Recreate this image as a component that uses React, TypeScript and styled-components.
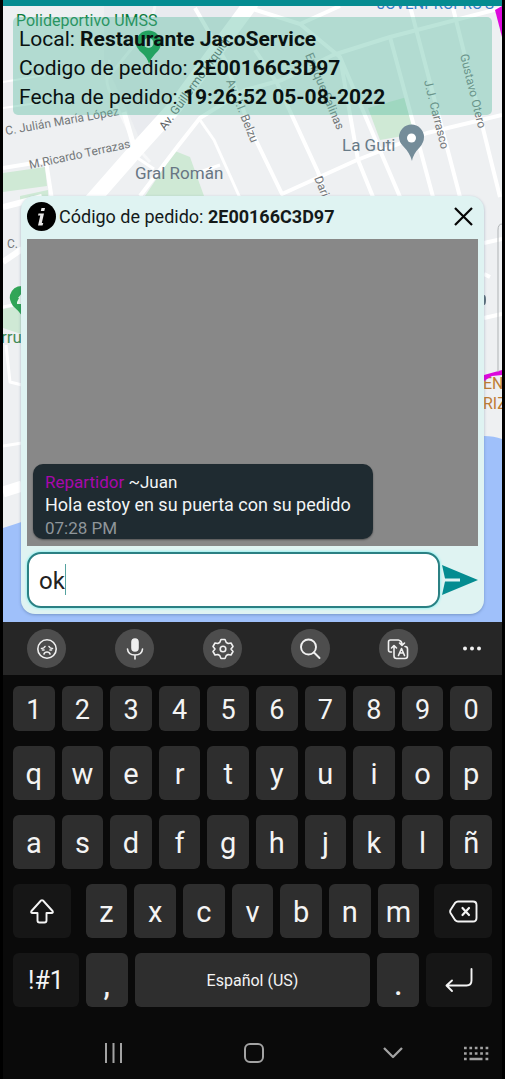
import React, { useState } from "react";
import styled, { createGlobalStyle } from "styled-components";

const teal = "#058c91";

const GlobalStyle = createGlobalStyle`
  *, *::before, *::after { box-sizing: border-box; }
  body { margin: 0; background: #000; font-family: Roboto, "Liberation Sans", sans-serif; }
  button, input { font: inherit; color: inherit; }
  button { margin: 0; padding: 0; border: 0; background: none; cursor: pointer; }
  svg { display: block; }
`;

const Phone = styled.div`
  min-height: 100vh;
  padding: 0 3px;
  background: #000;
  display: flex;
  flex-direction: column;
`;

const Stage = styled.main`
  position: relative;
  display: flex;
  flex-direction: column;
  padding-bottom: 8px;
  overflow: hidden;
  background: #eef0f2;
`;

const MapLayer = styled.svg`
  position: absolute;
  inset: 0;
  width: 100%;
  height: 100%;
`;

const TopBar = styled.div`
  position: relative;
  height: 6px;
  background: ${teal};
`;

const OrderSummary = styled.section`
  position: relative;
  margin: 11px 10px 0;
  padding: 8px 6px 3px;
  border-radius: 5px;
  background: rgba(88, 187, 160, 0.4);
  color: #0a1211;
  font-size: 21px;
  line-height: 29px;

  p { margin: 0; }
`;

const ChatCard = styled.section`
  position: relative;
  margin: 81px 18px 0;
  padding: 0 6px 6px;
  border-radius: 14px;
  background: #dff3f2;
  box-shadow: 0 1px 3px rgba(40, 70, 110, 0.35);
`;

const ChatHeader = styled.header`
  display: flex;
  align-items: center;
  gap: 3px;
  height: 43px;
  padding-bottom: 2px;
`;

const ChatTitle = styled.h1`
  flex: 1;
  margin: 0;
  color: #141a1a;
  font-size: 18px;
  line-height: 24px;
  font-weight: 400;
`;

const CloseButton = styled.button`
  display: grid;
  place-items: center;
  width: 29px;
  height: 29px;
  color: #050505;
`;

const Messages = styled.div`
  display: flex;
  flex-direction: column;
  justify-content: flex-end;
  align-items: flex-start;
  min-height: 307px;
  padding: 6px 6px 7px;
  background: #888;
`;

const Bubble = styled.article`
  padding: 7px 22px 0 12px;
  border-radius: 10px;
  background: #1f2b31;
  box-shadow: 0 1px 2px rgba(0, 0, 0, 0.4);
  color: #f2f5f6;
  font-size: 18px;
  line-height: 24px;

  p { margin: 0; }
`;

const Sender = styled.p`
  font-size: 17px;
  line-height: 22px;
`;

const Role = styled.span`
  color: #a808ac;
`;

const Time = styled.time`
  display: block;
  color: #8f969a;
  font-size: 17px;
  line-height: 22px;
`;

const Composer = styled.form`
  display: flex;
  align-items: center;
  margin-top: 6px;
`;

const MessageInput = styled.input`
  flex: 1;
  min-width: 0;
  height: 56px;
  padding: 2px 10px 0;
  border: 2px solid #2b8083;
  border-radius: 14px;
  background: #fff;
  box-shadow: 0 0 3px #5ff0f0;
  color: #222;
  font-size: 24px;
  outline: none;
`;

const InputWrap = styled.div`
  position: relative;
  flex: 1;
  display: flex;
`;

const Caret = styled.span`
  position: absolute;
  left: 38px;
  top: 12px;
  width: 1px;
  height: 31px;
  background: #55a3a0;
`;

const SendButton = styled.button`
  width: 38px;
  color: ${teal};
`;

const Toolbar = styled.div`
  display: grid;
  grid-template-columns: repeat(5, 88fr) 60fr;
  align-items: center;
  justify-items: center;
  height: 53px;
  background: #262626;
  color: #f0f0f0;
`;

const ToolButton = styled.button<{ $plain?: boolean }>`
  display: grid;
  place-items: center;
  width: 39px;
  height: 39px;
  border-radius: 50%;
  background: ${(p) => (p.$plain ? "transparent" : "#4d4d4d")};
`;

const Keyboard = styled.div`
  display: flex;
  flex-direction: column;
  gap: 15px;
  padding: 11px 10px 0;
  background: #0a0a0a;
`;

const KeyRow = styled.div<{ $short?: boolean }>`
  display: flex;
  gap: 7px;
  height: ${(p) => (p.$short ? 45 : 54)}px;
`;

const Key = styled.button<{ $grow?: number; $kind?: "special" | "space" | "mark"; $spaced?: "left" | "right" }>`
  flex: ${(p) => p.$grow ?? 42} 1 0;
  min-width: 0;
  display: flex;
  align-items: center;
  justify-content: center;
  border-radius: 6px;
  margin-left: ${(p) => (p.$spaced === "left" ? 8 : 0)}px;
  margin-right: ${(p) => (p.$spaced === "right" ? 8 : 0)}px;
  padding-top: ${(p) => (p.$kind === "mark" ? 10 : p.$kind ? 2 : 2)}px;
  background: ${(p) => (p.$kind === "special" ? "#161616" : "#2e2e2e")};
  color: #f4f4f4;
  font-size: ${(p) => (p.$kind === "space" ? 16 : p.$kind === "special" ? 25 : 29)}px;
  font-weight: ${(p) => (p.$kind === "mark" ? 500 : 400)};
  line-height: 34px;
`;

const NumberKey = styled(Key)`
  font-size: 27px;
`;

const NavBar = styled.nav`
  flex: 1;
  display: grid;
  grid-template-columns: repeat(3, minmax(0, 140fr)) minmax(0, 20fr);
  align-items: center;
  justify-items: center;
  min-height: 71px;
  padding: 20px 19px 0 41px;
  background: #0a0a0a;
  color: #a3a3a3;
`;

const NavButton = styled.button`
  display: grid;
  place-items: center;
  width: 20px;
  height: 26px;
`;

function CityMap() {
  return (
    <MapLayer viewBox="3 0 499 622" preserveAspectRatio="xMidYMin slice" aria-hidden="true">
      <path d="M3 6H245L140 140L128 112L104 60V6Z" fill="#e9ebef" />
      <g fill="#cfe9d5">
        <path d="M3 173L45 167L47 186L3 192Z" />
        <path d="M175 151L190 157L204 196H145Z" />
        <path d="M368 108L407 97L413 128L403 136L380 140Z" />
        <path d="M20 196L48 190V200H20Z" />
        <path d="M3 309L24 305V335L3 328Z" />
      </g>
      <g fill="none" stroke="#fff" strokeWidth="4" strokeLinejoin="round">
        <path d="M88 205L138 148L175 107L215 52L252 2" strokeWidth="15" />
        <path d="M3 168L46 161L52 200" />
        <path d="M3 82L45 75M3 108L38 103" strokeWidth="2" />
        <path d="M110 60Q104 78 109 90L136 146L150 162M106 80L150 26L155 6" strokeWidth="3" opacity="0.5" />
        <path d="M124 112L135 150" strokeWidth="5" />
        <path d="M140 196L178 146L200 118L245 90L282 80L333 55L390 37L502 8" />
        <path d="M200 120L214 140L240 198M200 172L220 165M136 157L154 169" strokeWidth="3" />
        <path d="M195 8L225 60L250 128L282 194L357 160L427 133L502 115" />
        <path d="M255 50L277 83L318 172L326 196M250 8L300 24L340 57L358 160L373 197M300 24L340 6M340 57L400 197M390 37L433 197M410 6L460 197M453 8L500 197" />
        <path d="M3 207L42 197M3 262L22 249" strokeWidth="6" />
        <path d="M3 307L22 303M3 446L22 443M6 345L10 382L22 385" strokeWidth="3" />
        <path d="M3 492L22 486" strokeWidth="11" />
        <path d="M484 243L502 239M484 318L502 314M484 274L490 277" />
      </g>
      <path d="M3 528Q60 510 130 480Q320 420 484 436Q494 436 502 439V622H3Z" fill="#9fc0fa" />
      <g fill="#74787a" fontSize="12">
        <text x="6" y="135" transform="rotate(-10 6 135)">C. Julián María López</text>
        <text x="30" y="169" transform="rotate(-12 30 169)">M.Ricardo Terrazas</text>
        <text x="165" y="131" transform="rotate(-54 165 131)" fill="#5b6062">Av. Guillermo Urquidi</text>
        <text x="226" y="81" transform="rotate(68 226 81)">Av. J.I. Belzu</text>
        <text x="305" y="55" transform="rotate(67 305 55)">Enrique Salinas</text>
        <text x="424" y="81" transform="rotate(76 424 81)">J.J. Carrasco</text>
        <text x="460" y="55" transform="rotate(76 460 55)">Gustavo Otero</text>
        <text x="314" y="178" transform="rotate(68 314 178)">Dari</text>
        <text x="7" y="248">C.</text>
      </g>
      <g fontSize="17">
        <text x="16" y="26" fill="#087a38" fontSize="16">Polideportivo UMSS</text>
        <text x="135" y="179" fill="#687683">Gral Román</text>
        <text x="342" y="151" fill="#687b88">La Guti</text>
        <text x="1" y="343" fill="#438b58">rru</text>
        <text x="483" y="389" fill="#bf7d32" fontSize="16">EN</text>
        <text x="483" y="409" fill="#bf7d32" fontSize="16">RIZ</text>
        <text x="377" y="9" fill="#347dcb" fontSize="15">JOVENPROPRO'S</text>
      </g>
      <path d="M149 64Q147 57 142 53Q136 48 136 43A12.5 12.5 0 0 1 161 43Q161 49 155 54Q151 58 149 64Z" fill="#009138" />
      <circle cx="148.500" cy="43" r="5" fill="#d8f4e2" />
      <path d="M412 161Q410 153 403 146Q399 142 399 137A12.500 12.500 0 0 1 424 137Q424 142 420 147Q413 154 412 161Z" fill="#748c99" />
      <circle cx="411.500" cy="138" r="4.500" fill="#fff" />
      <path d="M23 317Q19 311 13 306Q9 300 10 295Q13 285 24 286Z" fill="#31a557" />
      <path d="M17 302L19 298H18L22 293V304H17Z" fill="#eaf8ed" />
      <path d="M495 10L502 6V37Z" fill="#dd08dd" />
      <path d="M484 375L502 370V375L492 376L484 381Z" fill="#dd08dd" />
      <path d="M502 224Q498 224 498 230V372" fill="none" stroke="#afb3b5" />
      <ellipse cx="484" cy="300" rx="2" ry="5" fill="#60727e" />
    </MapLayer>
  );
}

const InfoIcon = () => (
  <svg width="29" height="29" viewBox="0 0 29 29" aria-hidden="true">
    <circle cx="14.500" cy="14.500" r="14.500" fill="#000" />
    <path d="M14.500 6H18L17.300 9H13.800ZM11.500 11.500H17L14.800 21H16.300L15.500 23.500H11L13.300 13.500H11Z" fill="#e8e8e8" />
  </svg>
);

const CloseIcon = () => (
  <svg width="19" height="19" viewBox="0 0 19 19" stroke="currentColor" strokeWidth="2.200" aria-hidden="true">
    <path d="M1 1L18 18M18 1L1 18" />
  </svg>
);

const SendIcon = () => (
  <svg width="38" height="32" viewBox="0 0 38 32" fill="currentColor" aria-hidden="true">
    <path d="M2 1L38 16L2 31L5 17.500H20V14.500H5Z" />
  </svg>
);

const line = {
  fill: "none",
  stroke: "currentColor",
  strokeWidth: 1.6,
  strokeLinecap: "round" as const,
  strokeLinejoin: "round" as const,
  "aria-hidden": true,
};

const SadIcon = () => (
  <svg width="22" height="22" viewBox="0 0 22 22" {...line}>
    <circle cx="11" cy="11" r="9.200" />
    <path d="M5.500 10.500Q8 10.500 9 8.500M16.500 10.500Q14 10.500 13 8.500M6.500 12H8M14 12H15.500M8 16Q8.500 14 11 14Q13.500 14 14 16" />
  </svg>
);

const MicIcon = () => (
  <svg width="20" height="24" viewBox="0 0 20 24" {...line}>
    <rect x="7" y="2" width="6" height="12" rx="3" fill="currentColor" />
    <path d="M2.500 12Q3 18 10 18Q17 18 17.500 12M10 18V22" />
  </svg>
);

const GearIcon = () => (
  <svg width="22" height="22" viewBox="0 0 22 22" {...line}>
    <path d="M9 1.500H13L14.300 4.500L16.200 5.500L19 5L21 8.500L19 11L21 13.500L19 17L16.200 16.500L14.300 17.500L13 20.500H9L7.700 17.500L5.800 16.500L3 17L1 13.500L3 11L1 8.500L3 5L5.800 5.500L7.700 4.500Z" />
    <circle cx="11" cy="11" r="2.800" />
  </svg>
);

const SearchIcon = () => (
  <svg width="22" height="22" viewBox="0 0 22 22" {...line} strokeWidth="1.900">
    <circle cx="9.500" cy="9" r="7.500" />
    <path d="M15 14.500L20.500 20" />
  </svg>
);

const TranslateIcon = () => (
  <svg width="22" height="22" viewBox="0 0 22 22" {...line}>
    <path d="M4.500 14H3.500Q1.500 14 1.500 12V4Q1.500 2 3.500 2H11.500M7 14.500V8M4.500 10L7 7.500L9.500 10M7 14.500V18Q7 20.500 9.500 20.500H18Q20.500 20.500 20.500 18V11Q20.500 8.500 18 8.500M12.500 2.500Q14.500 3 15 6M12.500 5L15 7.500L17.500 5M11.500 17.500L14.500 10.500L17.500 17.500M13 15H16" />
  </svg>
);

const MoreIcon = () => (
  <svg width="20" height="5" viewBox="0 0 20 5" fill="currentColor" aria-hidden="true">
    <circle cx="3" cy="2.500" r="2" />
    <circle cx="10" cy="2.500" r="2" />
    <circle cx="17" cy="2.500" r="2" />
  </svg>
);

const ShiftIcon = () => (
  <svg width="26" height="26" viewBox="0 0 26 26" {...line} strokeWidth="1.900">
    <path d="M14 1.500L23.500 12Q24.500 14 22.500 14H17.500V21.500Q17.500 23.500 15.500 23.500H10.500Q8.500 23.500 8.500 21.500V14H3.500Q1.500 14 2.500 12L12 1.500Q13 .8 14 1.500Z" />
  </svg>
);

const BackspaceIcon = () => (
  <svg width="29" height="25" viewBox="0 0 29 25" {...line} strokeWidth="1.900">
    <path d="M9 1.500H24Q27.500 1.500 27.500 5V18Q27.500 21.500 24 21.500H9Q7.500 21.500 6 20L1.500 13Q.8 11.500 1.500 10L6 3Q7.500 1.500 9 1.500Z" />
    <path d="M13.500 8L20 15M20 8L13.500 15" strokeWidth="2.200" />
  </svg>
);

const EnterIcon = () => (
  <svg width="28" height="26" viewBox="0 0 28 26" {...line} strokeWidth="1.900">
    <path d="M26.500 1V12.500Q26.500 17.500 21.500 17.500H2M7 12.500L1.500 17.500L7 23" />
  </svg>
);

const RecentsIcon = () => (
  <svg width="19" height="20" viewBox="0 0 19 20" {...line} strokeWidth="2" strokeLinecap="butt">
    <path d="M2 0V20M9.500 0V20M17 0V20" />
  </svg>
);

const HomeIcon = () => (
  <svg width="20" height="20" viewBox="0 0 20 20" {...line} strokeWidth="2">
    <rect x="1" y="1" width="18" height="18" rx="5" />
  </svg>
);

const ChevronIcon = () => (
  <svg width="20" height="12" viewBox="0 0 20 12" {...line} strokeWidth="2.300" strokeLinecap="butt">
    <path d="M1 1L10 10L19 1" />
  </svg>
);

const KeyboardIcon = () => (
  <svg width="26" height="15" viewBox="0 0 26 15" stroke="currentColor" strokeWidth="2.600" aria-hidden="true">
    <path d="M1 2H26M1 7.500H26" strokeDasharray="2.700 2.700" />
    <path d="M1 13H3.700M6.500 13H19.500M22.500 13H25.300" />
  </svg>
);

const letterRows = ["qwertyuiop", "asdfghjklñ"];

export default function App() {
  const [text, setText] = useState("ok");
  const type = (value: string) => setText((current) => current + value);

  return (
    <>
      <GlobalStyle />
      <Phone>
        <Stage>
          <CityMap />
          <TopBar />
          <OrderSummary>
            <p>Local: <b>Restaurante JacoService</b></p>
            <p>Codigo de pedido: <b>2E00166C3D97</b></p>
            <p>Fecha de pedido: <b>19:26:52 05-08-2022</b></p>
          </OrderSummary>
          <ChatCard>
            <ChatHeader>
              <InfoIcon />
              <ChatTitle>Código de pedido: <b>2E00166C3D97</b></ChatTitle>
              <CloseButton type="button" aria-label="Cerrar"><CloseIcon /></CloseButton>
            </ChatHeader>
            <Messages>
              <Bubble>
                <Sender><Role>Repartidor</Role> ~Juan</Sender>
                <p>Hola estoy en su puerta con su pedido</p>
                <Time>07:28 PM</Time>
              </Bubble>
            </Messages>
            <Composer onSubmit={(event) => event.preventDefault()}>
              <InputWrap>
                <MessageInput aria-label="Mensaje" value={text} onChange={(event) => setText(event.target.value)} />
                {text === "ok" && <Caret />}
              </InputWrap>
              <SendButton type="submit" aria-label="Enviar"><SendIcon /></SendButton>
            </Composer>
          </ChatCard>
        </Stage>

        <Toolbar>
          <ToolButton aria-label="Emojis"><SadIcon /></ToolButton>
          <ToolButton aria-label="Voz"><MicIcon /></ToolButton>
          <ToolButton aria-label="Ajustes"><GearIcon /></ToolButton>
          <ToolButton aria-label="Buscar"><SearchIcon /></ToolButton>
          <ToolButton aria-label="Traducir"><TranslateIcon /></ToolButton>
          <ToolButton $plain aria-label="Más"><MoreIcon /></ToolButton>
        </Toolbar>

        <Keyboard>
          <KeyRow $short>
            {[..."1234567890"].map((k) => <NumberKey key={k} onClick={() => type(k)}>{k}</NumberKey>)}
          </KeyRow>
          {letterRows.map((row) => (
            <KeyRow key={row}>
              {[...row].map((k) => <Key key={k} onClick={() => type(k)}>{k}</Key>)}
            </KeyRow>
          ))}
          <KeyRow>
            <Key $kind="special" $grow={58} $spaced="right" aria-label="Mayúsculas"><ShiftIcon /></Key>
            {[..."zxcvbnm"].map((k) => <Key key={k} onClick={() => type(k)}>{k}</Key>)}
            <Key $kind="special" $grow={58} $spaced="left" aria-label="Borrar" onClick={() => setText((t) => t.slice(0, -1))}><BackspaceIcon /></Key>
          </KeyRow>
          <KeyRow>
            <Key $kind="special" $grow={66}>!#1</Key>
            <Key $kind="mark" onClick={() => type(",")}>,</Key>
            <Key $kind="space" $grow={236} onClick={() => type(" ")}>Español (US)</Key>
            <Key $kind="mark" onClick={() => type(".")}>.</Key>
            <Key $kind="special" $grow={66} aria-label="Intro"><EnterIcon /></Key>
          </KeyRow>
        </Keyboard>

        <NavBar aria-label="Sistema">
          <NavButton aria-label="Recientes"><RecentsIcon /></NavButton>
          <NavButton aria-label="Inicio"><HomeIcon /></NavButton>
          <NavButton aria-label="Ocultar teclado"><ChevronIcon /></NavButton>
          <NavButton aria-label="Cambiar teclado"><KeyboardIcon /></NavButton>
        </NavBar>
      </Phone>
    </>
  );
}
